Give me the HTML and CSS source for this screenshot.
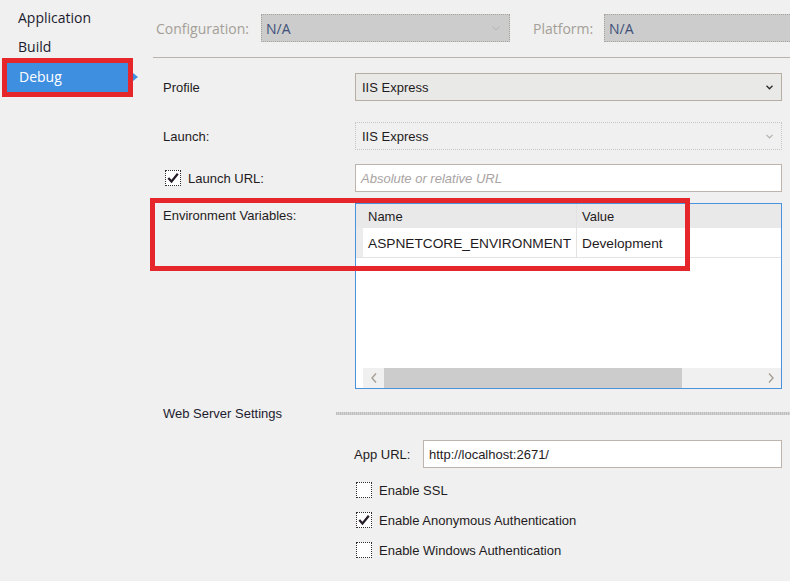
FILE: index.html
```html
<!DOCTYPE html>
<html>
<head>
<meta charset="utf-8">
<title>Debug</title>
<link rel="stylesheet" href="styles.css">
</head>
<body>
<div class="page">
  <nav class="sidebar">
    <div class="nav-item">Application</div>
    <div class="nav-item">Build</div>
    <div class="nav-item active">Debug</div>
    <span class="nav-pointer"></span>
    <div class="annot annot-debug"></div>
  </nav>

  <main class="main">
    <div class="topbar">
      <span class="top-label cfg-label">Configuration:</span>
      <div class="top-select cfg-select">
        <span>N/A</span>
        <svg class="chev" width="8" height="5" viewBox="0 0 8 5"><path d="M0.5 0.5L4 4L7.5 0.5" fill="none" stroke="#b9b3ad" stroke-width="1"/></svg>
      </div>
      <span class="top-label plat-label">Platform:</span>
      <div class="top-select plat-select"><span>N/A</span></div>
    </div>

    <div class="form">
      <div class="row row-profile">
        <span class="lbl">Profile</span>
        <div class="select">
          <span>IIS Express</span>
          <svg class="chev" width="7" height="5" viewBox="0 0 7 5"><path d="M0.5 0.8L3.5 3.8L6.5 0.8" fill="none" stroke="#2a2a2a" stroke-width="1.3"/></svg>
        </div>
      </div>

      <div class="row row-launch">
        <span class="lbl">Launch:</span>
        <div class="select select-disabled">
          <span>IIS Express</span>
          <svg class="chev" width="7" height="5" viewBox="0 0 7 5"><path d="M0.5 0.8L3.5 3.8L6.5 0.8" fill="none" stroke="#b4b0ac" stroke-width="1.2"/></svg>
        </div>
      </div>

      <div class="row row-url">
        <label class="lbl lbl-check">
          <span class="cb">
            <svg width="14" height="14" viewBox="0 0 14 14"><path d="M2.3 7L5.5 10.5L11.8 2.8" fill="none" stroke="#231a26" stroke-width="2.2"/></svg>
          </span>
          <span>Launch URL:</span>
        </label>
        <div class="input placeholder">Absolute or relative URL</div>
      </div>

      <div class="row row-env">
        <span class="lbl lbl-env">Environment Variables:</span>
        <div class="grid">
          <div class="grid-head">
            <div class="gutter"></div>
            <div class="col1">Name</div>
            <div class="col2">Value</div>
          </div>
          <div class="grid-row">
            <div class="gutter"></div>
            <div class="col1">ASPNETCORE_ENVIRONMENT</div>
            <div class="col2">Development</div>
          </div>
          <div class="grid-body"></div>
          <div class="hscroll">
            <div class="sbtn">
              <svg width="6" height="10" viewBox="0 0 6 10"><path d="M5 0.5L1 5L5 9.5" fill="none" stroke="#a69e96" stroke-width="1.4"/></svg>
            </div>
            <div class="thumb"></div>
            <div class="track"></div>
            <div class="sbtn">
              <svg width="6" height="10" viewBox="0 0 6 10"><path d="M1 0.5L5 5L1 9.5" fill="none" stroke="#a69e96" stroke-width="1.4"/></svg>
            </div>
          </div>
        </div>
      </div>

      <div class="row row-web">
        <span class="lbl-web">Web Server Settings</span>
        <div class="sep"></div>
      </div>

      <div class="row row-app">
        <span class="lbl-app">App URL:</span>
        <div class="input url-input">http://localhost:2671/</div>
      </div>

      <div class="row row-check">
        <span class="cb"></span>
        <span>Enable SSL</span>
      </div>
      <div class="row row-check">
        <span class="cb">
          <svg width="14" height="14" viewBox="0 0 14 14"><path d="M2.3 7L5.5 10.5L11.8 2.8" fill="none" stroke="#231a26" stroke-width="2.2"/></svg>
        </span>
        <span>Enable Anonymous Authentication</span>
      </div>
      <div class="row row-check">
        <span class="cb"></span>
        <span>Enable Windows Authentication</span>
      </div>
    </div>
  </main>

  <div class="annot annot-env"></div>
</div>
</body>
</html>
```

FILE: styles.css
```css
* { box-sizing: border-box; }

html, body {
  margin: 0;
  padding: 0;
}

body {
  width: 790px;
  height: 581px;
  overflow: hidden;
  background: #eff0ef;
  font-family: "Liberation Sans", Arial, sans-serif;
  font-size: 13px;
  color: #1f1b1e;
}

.page {
  position: relative;
  display: flex;
  height: 581px;
}

/* ---------- sidebar ---------- */
.sidebar {
  position: relative;
  width: 150px;
  flex: none;
  padding-top: 4px;
  display: flex;
  flex-direction: column;
  gap: 1px;
  font-family: "Open Sans", sans-serif;
  font-size: 14px;
  color: #1d1b30;
}

.nav-item {
  height: 28px;
  line-height: 27px;
  padding-left: 18px;
}

.nav-item.active {
  margin: 1px 0 0 7px;
  width: 121px;
  height: 29px;
  line-height: 28px;
  padding-left: 12px;
  background: #3f8fe0;
  color: #ffffff;
}

.nav-pointer {
  position: absolute;
  left: 133px;
  top: 73px;
  width: 0;
  height: 0;
  border-left: 5px solid #3f8fe0;
  border-top: 4px solid transparent;
  border-bottom: 4px solid transparent;
}

.annot {
  position: absolute;
  border: 5px solid #e5262b;
  pointer-events: none;
}

.annot-debug {
  left: 2px;
  top: 58px;
  width: 131px;
  height: 39px;
}

.annot-env {
  left: 150px;
  top: 198px;
  width: 540px;
  height: 73px;
}

/* ---------- main ---------- */
.main {
  flex: 1;
  min-width: 0;
  overflow: hidden;
}

.topbar {
  display: flex;
  align-items: center;
  height: 58px;
  margin-left: 3px;
  padding-left: 3px;
  padding-bottom: 1px;
  border-bottom: 1px solid #bbb3ab;
  font-family: "Open Sans", sans-serif;
  font-size: 14px;
  color: #a59e97;
  white-space: nowrap;
}

.top-label { flex: none; }
.cfg-label { width: 105px; }
.plat-label { width: 71px; margin-left: 23px; }

.top-select {
  flex: none;
  display: flex;
  align-items: center;
  justify-content: space-between;
  height: 28px;
  padding: 0 9px 0 4px;
  background: #cbcccb;
  border: 1px dotted #a9a29b;
  color: #41507a;
}

.cfg-select { width: 249px; }
.plat-select { width: 220px; }

/* ---------- form ---------- */
.form {
  padding: 15px 8px 0 13px;
}

.row {
  display: flex;
  align-items: center;
}

.lbl {
  width: 192px;
  flex: none;
}

.select {
  flex: 1;
  height: 28px;
  display: flex;
  align-items: center;
  justify-content: space-between;
  padding: 0 8px 0 6px;
  background: #e9e9e7;
  border: 1px solid #b6ada3;
}

.select-disabled {
  background: transparent;
  border: 1px dotted #c6c6c6;
}

.chev { display: block; }

.row-profile { height: 28px; }
.row-launch { height: 28px; margin-top: 21px; }
.row-url { height: 28px; margin-top: 14px; }

.lbl-check {
  display: flex;
  align-items: center;
  gap: 7px;
  padding-left: 2px;
}

.cb {
  width: 16px;
  height: 16px;
  flex: none;
  display: flex;
  align-items: center;
  justify-content: center;
  background: #ffffff;
  border: 1px dotted #2f2b2f;
}

.input {
  flex: 1;
  height: 28px;
  display: flex;
  align-items: center;
  padding-left: 5px;
  background: #ffffff;
  border: 1px solid #bdb5ad;
}

.placeholder {
  font-style: italic;
  color: #a9a3a3;
}

/* ---------- environment grid ---------- */
.row-env {
  align-items: flex-start;
  margin-top: 11px;
}

.lbl-env { line-height: 26px; }

.grid {
  flex: 1;
  height: 186px;
  display: flex;
  flex-direction: column;
  background: #ffffff;
  border: 1px solid #4a92dc;
  font-size: 13.7px;
}

.grid-head,
.grid-row {
  display: flex;
  flex: none;
}

.grid-head {
  height: 24px;
  line-height: 25px;
  background: #e9e9e9;
  font-size: 13px;
}

.grid-row {
  height: 30px;
  line-height: 31px;
  border-bottom: 1px solid #e4e4e4;
}

.gutter {
  width: 7px;
  flex: none;
  background: #ececec;
}

.grid-head .gutter { background: #e9e9e9; }

.col1 {
  width: 214px;
  flex: none;
  padding-left: 5px;
  border-right: 1px solid #e2e2e2;
  white-space: nowrap;
  overflow: hidden;
}

.col2 {
  flex: 1;
  padding-left: 5px;
}

.grid-body { flex: 1; }

.hscroll {
  flex: none;
  height: 20px;
  margin-left: 7px;
  display: flex;
  background: #f0f0f0;
}

.sbtn {
  width: 21px;
  flex: none;
  display: flex;
  align-items: center;
  justify-content: center;
}

.thumb {
  width: 298px;
  flex: none;
  background: #cbcccb;
}

.track { flex: 1; }

/* ---------- web server ---------- */
.row-web {
  height: 20px;
  margin-top: 14px;
  margin-right: -8px;
}

.lbl-web {
  width: 173px;
  flex: none;
  color: #1d1b30;
}

.sep {
  flex: 1;
  height: 3px;
  margin-top: 1px;
  background: repeating-linear-gradient(90deg, #bdbdbd 0 1px, #d3d3d3 1px 2px);
}

.row-app {
  margin-top: 17px;
  padding-left: 191px;
}

.lbl-app {
  width: 69px;
  flex: none;
}

.url-input {
  height: 28px;
  color: #1f1b1e;
}

.row-check {
  height: 30px;
  padding-left: 193px;
  gap: 7px;
}

.row-app + .row-check { margin-top: 7px; }
```
